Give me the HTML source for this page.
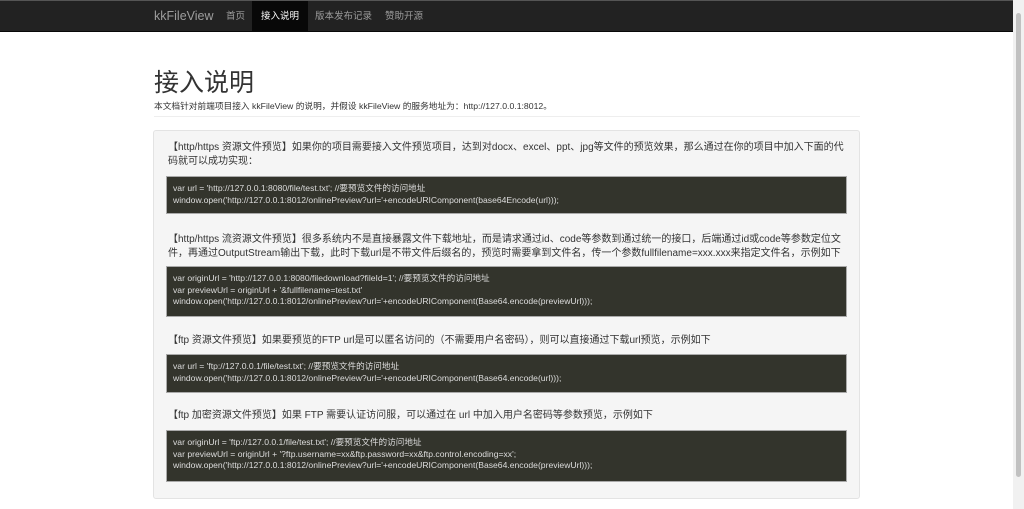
<!DOCTYPE html>
<html><head><meta charset="utf-8"><style>
*{margin:0;padding:0;box-sizing:border-box}
body{width:1024px;height:509px;overflow:hidden;background:#fff;font-family:"Liberation Sans","Noto Sans CJK SC",sans-serif;color:#333;position:relative}
.nav{position:absolute;left:0;top:0;width:1013px;height:32px;background:#222;border-bottom:1px solid #080808;border-top:1px solid #555}
.nav span{position:absolute;top:0;height:31px;line-height:31px;font-size:9.5px;color:#9d9d9d}
.nav .brand{font-size:12.5px;left:154px}
.nav .act{background:#080808;color:#fff;padding:0 9px}
.sb{position:absolute;left:1013px;top:0;width:11px;height:509px;background:#f1f1f1}
.sb i{position:absolute;left:3px;top:13px;width:5px;height:464px;background:#c1c1c1;border-radius:3px}
h1{position:absolute;left:154px;top:63px;font-size:25px;font-weight:400;color:#333}
.sub{position:absolute;left:154px;top:99px;font-size:8.7px}
.hr{position:absolute;left:154px;top:116px;width:706px;height:1px;background:#eee}
.panel{position:absolute;left:153px;top:130px;width:707px;height:369px;background:#f5f5f5;border:1px solid #e3e3e3;border-radius:3px}
.t{position:absolute;left:168px;font-size:10px;line-height:14px;width:680px;color:#333}
.c{position:absolute;left:166px;width:681px;background:#33342c;color:#ddd;font-size:8.6px;line-height:11.5px;padding:6px 6px;border:1px solid #aaa}
</style></head><body>
<div class="nav"><span class="brand">kkFileView</span><span style="left:226px">首页</span><span class="act" style="left:252px">接入说明</span><span style="left:315px">版本发布记录</span><span style="left:385px">赞助开源</span></div>
<div class="sb"><i></i></div>
<h1>接入说明</h1>
<div class="sub">本文档针对前端项目接入 kkFileView 的说明，并假设 kkFileView 的服务地址为：http://127.0.0.1:8012。</div>
<div class="hr"></div>
<div class="panel"></div>
<div class="t" style="top:141px">【http/https 资源文件预览】如果你的项目需要接入文件预览项目，达到对docx、excel、ppt、jpg等文件的预览效果，那么通过在你的项目中加入下面的代码就可以成功实现：</div>
<div class="c" style="top:176px;height:38px">var url = 'http://127.0.0.1:8080/file/test.txt'; //要预览文件的访问地址<br>window.open('http://127.0.0.1:8012/onlinePreview?url='+encodeURIComponent(base64Encode(url)));</div>
<div class="t" style="top:233px">【http/https 流资源文件预览】很多系统内不是直接暴露文件下载地址，而是请求通过id、code等参数到通过统一的接口，后端通过id或code等参数定位文件，再通过OutputStream输出下载，此时下载url是不带文件后缀名的，预览时需要拿到文件名，传一个参数fullfilename=xxx.xxx来指定文件名，示例如下</div>
<div class="c" style="top:266px;height:51px">var originUrl = 'http://127.0.0.1:8080/filedownload?fileId=1'; //要预览文件的访问地址<br>var previewUrl = originUrl + '&amp;fullfilename=test.txt'<br>window.open('http://127.0.0.1:8012/onlinePreview?url='+encodeURIComponent(Base64.encode(previewUrl)));</div>
<div class="t" style="top:334px">【ftp 资源文件预览】如果要预览的FTP url是可以匿名访问的（不需要用户名密码），则可以直接通过下载url预览，示例如下</div>
<div class="c" style="top:354px;height:39px">var url = 'ftp://127.0.0.1/file/test.txt'; //要预览文件的访问地址<br>window.open('http://127.0.0.1:8012/onlinePreview?url='+encodeURIComponent(Base64.encode(url)));</div>
<div class="t" style="top:409px">【ftp 加密资源文件预览】如果 FTP 需要认证访问服，可以通过在 url 中加入用户名密码等参数预览，示例如下</div>
<div class="c" style="top:430px;height:52px">var originUrl = 'ftp://127.0.0.1/file/test.txt'; //要预览文件的访问地址<br>var previewUrl = originUrl + '?ftp.username=xx&amp;ftp.password=xx&amp;ftp.control.encoding=xx';<br>window.open('http://127.0.0.1:8012/onlinePreview?url='+encodeURIComponent(Base64.encode(previewUrl)));</div>
</body></html>
